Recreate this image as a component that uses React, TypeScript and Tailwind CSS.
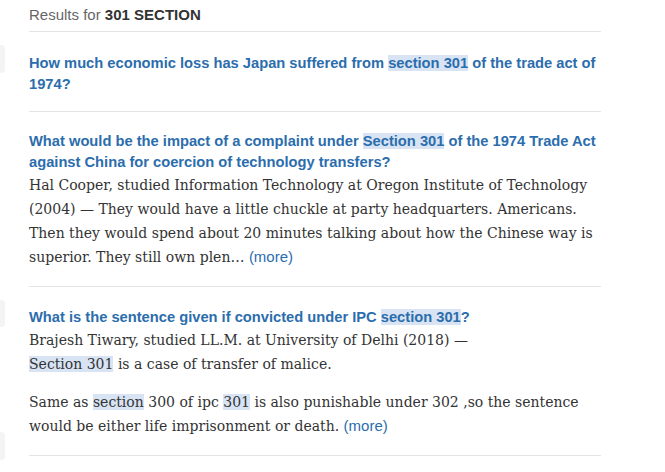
import React from 'react';

const Hl: React.FC<{ children: React.ReactNode }> = ({ children }) => (
  <span className="bg-[#d8e4f3]">{children}</span>
);

const More = () => (
  <span className="text-[#2b6dad] font-['Liberation_Sans',Arial,sans-serif] text-[15px]">(more)</span>
);

const Title: React.FC<{ children: React.ReactNode }> = ({ children }) => (
  <h3 className="font-['Liberation_Sans',Arial,sans-serif] font-bold text-[14.7px] leading-[21px] text-[#2b6dad]">
    {children}
  </h3>
);

const Body: React.FC<{ children: React.ReactNode; className?: string }> = ({ children, className }) => (
  <p className={`font-['DejaVu_Serif',Georgia,serif] text-[14px] leading-[24px] text-[#333] ${className ?? ''}`}>
    {children}
  </p>
);

export default function App() {
  return (
    <div className="flex w-[665px] h-[472px] bg-white overflow-hidden">
      {/* edge of a sidebar cut off by the crop */}
      <div className="w-[5px] flex flex-col">
        <div className="mt-[45px] h-[28px] rounded-r bg-[#f4f4f4]" />
        <div className="mt-[227px] h-[27px] rounded-r bg-[#f4f4f4]" />
        <div className="mt-[105px] h-[28px] rounded-r bg-[#f4f4f4]" />
      </div>

      <div className="ml-[24px] w-[572px]">
        <div className="h-[32px] pt-[5px] border-b border-[#e4e4e4] font-['Liberation_Sans',Arial,sans-serif] text-[15px] leading-[20px] text-[#666]">
          Results for <span className="font-bold text-[#333]">301 SECTION</span>
        </div>

        <div className="pt-[21px] pb-[16px] border-b border-[#e4e4e4]">
          <Title>
            How much economic loss has Japan suffered from <Hl>section 301</Hl> of the trade act of 1974?
          </Title>
        </div>

        <div className="pt-[19px] pb-[17px] border-b border-[#e4e4e4]">
          <Title>
            What would be the impact of a complaint under <Hl>Section 301</Hl> of the 1974 Trade Act against
            China for coercion of technology transfers?
          </Title>
          <Body>
            Hal Cooper, studied Information Technology at Oregon Institute of Technology (2004) — They would
            have a little chuckle at party headquarters. Americans. Then they would spend about 20 minutes
            talking about how the Chinese way is superior. They still own plen… <More />
          </Body>
        </div>

        <div className="pt-[20px] pb-[17px] border-b border-[#e4e4e4]">
          <Title>
            What is the sentence given if convicted under IPC <Hl>section 301</Hl>?
          </Title>
          <Body>
            Brajesh Tiwary, studied LL.M. at University of Delhi (2018) —
            <br />
            <Hl>Section 301</Hl> is a case of transfer of malice.
          </Body>
          <Body className="mt-[14px]">
            Same as <Hl>section</Hl> 300 of ipc <Hl>301</Hl> is also punishable under 302 ,so the sentence
            would be either life imprisonment or death. <More />
          </Body>
        </div>
      </div>
    </div>
  );
}
